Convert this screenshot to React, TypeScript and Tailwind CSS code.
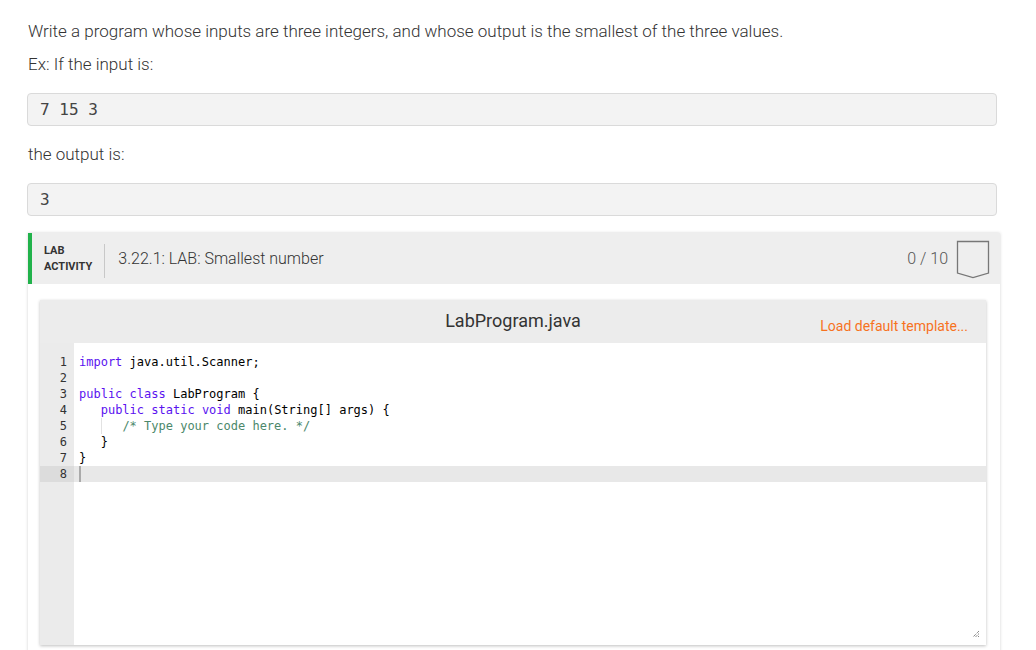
import React from "react";

const KW = "text-[#5a12f0]";
const CM = "text-[#4c886b]";

const codeLines: React.ReactNode[] = [
    <><span className={KW}>import</span> java.util.Scanner;</>,
    <>&nbsp;</>,
    <><span className={KW}>public</span> <span className={KW}>class</span> LabProgram {"{"}</>,
    <>{"   "}<span className={KW}>public</span> <span className={KW}>static</span> <span className={KW}>void</span> main(String[] args) {"{"}</>,
    <>{"   "}<span className="relative">{"   "}<span className="absolute left-0 top-[-1px] h-4 border-l border-[#e2e2e2]" /></span><span className={CM}>/* Type your code here. */</span></>,
    <>{"   }"}</>,
    <>{"}"}</>,
    <>&nbsp;</>,
];

export default function App() {
    return <div className="h-[650px] w-[1036px] overflow-hidden bg-white text-[#333] font-['Roboto',sans-serif]">
        <div className="pl-[27px] pt-[19px]">
            <p className="pl-px text-[17px] font-light leading-6">Write a program whose inputs are three integers, and whose output is the smallest of the three values.</p>
            <p className="mt-[9px] pl-px text-[17px] font-light leading-6">Ex: If the input is:</p>
            <OutputBox text="7 15 3" />
            <p className="mt-4 pl-px text-[17px] font-light leading-6">the output is:</p>
            <OutputBox text="3" />

            <div className="mt-[17px] ml-px w-[972px] h-[420px] bg-white shadow-[0_0_3px_rgba(0,0,0,0.18)]">
                <LabHeader />
                <div className="pl-3 pr-[14px] pt-4">
                    <Editor />
                </div>
            </div>
        </div>
    </div>
}

function OutputBox({ text }: { text: string }) {
    return <div className="mt-[17px] w-[970px] h-[33px] flex items-center px-3 bg-[#f3f3f3] border border-[#dadada] rounded-sm">
        <span className="font-['DejaVu_Sans_Mono',monospace] text-base font-light text-[#444] whitespace-pre">{text}</span>
    </div>
}

function LabHeader() {
    return <div className="h-[51px] flex items-center bg-[#eeeeee] border-l-4 border-[#21b24b]">
        <div className="pl-3 pr-3 text-[11px] leading-4 font-bold text-[#333] uppercase">
            <div>Lab</div>
            <div>Activity</div>
        </div>
        <div className="w-px h-[34px] bg-[#c8c8c8] mt-1" />
        <div className="pl-[13px] text-base text-[#333] flex-1 font-light">3.22.1: LAB: Smallest number</div>
        <div className="text-base text-[#555] pr-2 font-light">0 / 10</div>
        <svg width="34" height="40" viewBox="0 0 34 40" className="mr-[10px]">
            <path d="M1.5 2.5 H32.5 V34 L17 38.5 L1.5 34 Z" fill="none" stroke="#777" strokeWidth="1.3" />
        </svg>
    </div>
}

function Editor() {
    return <div className="h-[345px] flex flex-col shadow-[0_1px_3px_rgba(0,0,0,0.25)]">
        <div className="h-[43px] flex items-center bg-[#ececec] relative">
            <div className="flex-1 text-center text-lg text-[#333] pb-0.5">LabProgram.java</div>
            <button className="absolute right-[18px] top-[16px] text-sm text-[#f7721e]">Load default template...</button>
        </div>
        <div className="flex-1 flex bg-white relative font-['DejaVu_Sans_Mono',monospace] text-xs">
            <div className="w-[34px] bg-[#ebebeb] pt-[11px]">
                {codeLines.map((_, i) =>
                    <div key={i} className={`h-4 leading-4 text-right pr-[7px] text-[#333] ${i === 7 ? "bg-[#dcdcdc]" : ""}`}>{i + 1}</div>
                )}
            </div>
            <div className="flex-1 pt-[11px]">
                {codeLines.map((line, i) =>
                    <div key={i} className={`h-4 leading-4 pl-[5px] whitespace-pre text-black relative ${i === 7 ? "bg-[#e8e8e8]" : ""}`}>
                        {line}
                        {i === 7 && <span className="absolute left-[5px] top-0 w-[2px] h-4 bg-[#aaa]" />}
                    </div>
                )}
            </div>
            <svg width="8" height="8" viewBox="0 0 8 8" className="absolute right-[6px] bottom-[7px]">
                <path d="M7 1 L1 7 M7 3.5 L3.5 7 M7 6 L6 7" stroke="#555" strokeWidth="1" strokeDasharray="1 1" />
            </svg>
        </div>
    </div>
}
